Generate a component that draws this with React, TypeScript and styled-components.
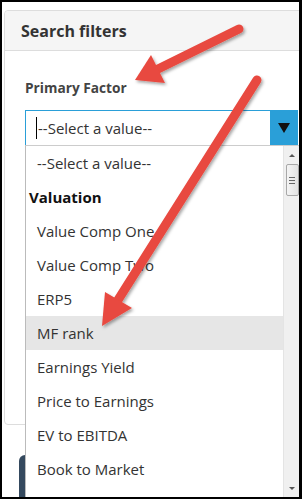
import styled, { createGlobalStyle } from 'styled-components';

const GlobalStyle = createGlobalStyle`
  html, body {
    margin: 0;
    padding: 0;
    background: #fff;
  }
  body {
    font-family: "Open Sans", "Noto Sans", sans-serif;
    color: #333;
  }
`;

const Frame = styled.div`
  position: relative;
  box-sizing: border-box;
  width: 302px;
  height: 499px;
  border-style: solid;
  border-color: #000;
  border-width: 2px 3px 2px 2px;
  background: #fff;
  overflow: hidden;
`;

const Panel = styled.section`
  margin: 8px 0 0 2px;
  width: 340px;
  border: 1px solid #ddd;
  border-radius: 4px;
  background: #fff;
`;

const PanelHeader = styled.header`
  height: 39px;
  padding: 0 16px;
  display: flex;
  align-items: center;
  background: #f5f5f5;
  border-bottom: 1px solid #ddd;
  border-radius: 4px 4px 0 0;
`;

const PanelTitle = styled.h3`
  margin: 0;
  font-size: 16px;
  font-weight: 700;
  color: #333;
`;

const PanelBody = styled.div`
  position: relative;
  height: 373px;
  padding: 27px 0 0 20px;
  box-sizing: border-box;
`;

const Label = styled.label`
  display: block;
  font-size: 13.7px;
  font-weight: 700;
  color: #444;
  margin-bottom: 13px;
`;

const SelectBox = styled.div`
  display: flex;
  width: 273px;
  height: 36px;
  box-sizing: border-box;
`;

const SelectField = styled.div`
  flex: 1;
  display: flex;
  align-items: center;
  padding-left: 10px;
  border: 1px solid #2a9fd8;
  border-right: none;
  font-size: 15px;
  color: #333;
`;

const Caret = styled.span`
  width: 1px;
  height: 22px;
  background: #000;
  margin-right: 1px;
`;

const SelectButton = styled.div`
  width: 28px;
  background: #2a9fd8;
  display: flex;
  align-items: center;
  justify-content: center;
`;

const Triangle = styled.span`
  width: 0;
  height: 0;
  border-left: 6px solid transparent;
  border-right: 6px solid transparent;
  border-top: 10px solid #111;
`;

const Dropdown = styled.div`
  position: absolute;
  left: 23px;
  top: 143px;
  width: 300px;
  height: 352px;
  display: flex;
  background: #fff;
  border-left: 1px solid #bbb;
  border-top: 1px solid #ccc;
  z-index: 2;
`;

const OptionList = styled.ul`
  list-style: none;
  margin: 0;
  padding: 0;
  width: 257px;
`;

const Option = styled.li<{ $group?: boolean; $hover?: boolean }>`
  height: 34px;
  display: flex;
  align-items: center;
  padding-left: ${(p) => (p.$group ? '3px' : '11px')};
  font-size: 15px;
  font-weight: ${(p) => (p.$group ? 700 : 400)};
  color: ${(p) => (p.$group ? '#111' : '#333')};
  background: ${(p) => (p.$hover ? '#e6e6e6' : '#fff')};
`;

const Scrollbar = styled.div`
  width: 16px;
  background: #f0f0f0;
  border-left: 1px solid #e4e4e4;
  display: flex;
  flex-direction: column;
  align-items: center;
`;

const ScrollArrow = styled.span<{ $down?: boolean }>`
  width: 0;
  height: 0;
  margin: ${(p) => (p.$down ? 'auto 0 8px' : '8px 0 0')};
  border-left: 3px solid transparent;
  border-right: 3px solid transparent;
  ${(p) => (p.$down ? 'border-top: 3px solid #555;' : 'border-bottom: 3px solid #555;')}
`;

const Thumb = styled.div`
  margin-top: 7px;
  width: 13px;
  height: 32px;
  box-sizing: border-box;
  border: 1px solid #a8a8a8;
  border-radius: 2px;
  background: linear-gradient(to right, #f4f4f4, #e2e2e2);
  display: flex;
  flex-direction: column;
  align-items: center;
  justify-content: center;
  gap: 2px;
`;

const Grip = styled.span`
  width: 6px;
  height: 1px;
  background: #666;
`;

const DarkButton = styled.div`
  margin: 30px 0 0 17px;
  width: 120px;
  height: 60px;
  background: #34495e;
  border-radius: 6px;
`;

const Overlay = styled.svg`
  position: absolute;
  left: -2px;
  top: -2px;
  z-index: 5;
  pointer-events: none;
`;

const options = [
  { text: 'Value Comp One' },
  { text: 'Value Comp Two' },
  { text: 'ERP5' },
  { text: 'MF rank', hover: true },
  { text: 'Earnings Yield' },
  { text: 'Price to Earnings' },
  { text: 'EV to EBITDA' },
  { text: 'Book to Market' },
];

function Arrow({ tail, tip, base, wings }: { tail: string; tip: string; base: string; wings: [string, string] }) {
  const [bx, by] = base.split(',');
  const [tx, ty] = tail.split(',');
  return (
    <g filter="url(#shadow)">
      <line x1={tx} y1={ty} x2={bx} y2={by} stroke="#e8493f" strokeWidth="9" strokeLinecap="round" />
      <polygon points={`${tip} ${wings[0]} ${wings[1]}`} fill="#e8493f" />
    </g>
  );
}

export default function App() {
  return (
    <>
      <GlobalStyle />
      <Frame>
        <Panel>
          <PanelHeader>
            <PanelTitle>Search filters</PanelTitle>
          </PanelHeader>
          <PanelBody>
            <Label>Primary Factor</Label>
            <SelectBox>
              <SelectField>
                <Caret />
                --Select a value--
              </SelectField>
              <SelectButton>
                <Triangle />
              </SelectButton>
            </SelectBox>
          </PanelBody>
        </Panel>
        <DarkButton />
        <Dropdown>
          <OptionList>
            <Option>--Select a value--</Option>
            <Option $group>Valuation</Option>
            {options.map((o) => (
              <Option key={o.text} $hover={o.hover}>
                {o.text}
              </Option>
            ))}
          </OptionList>
          <Scrollbar>
            <ScrollArrow />
            <Thumb>
              <Grip />
              <Grip />
              <Grip />
            </Thumb>
            <ScrollArrow $down />
          </Scrollbar>
        </Dropdown>
        <Overlay width="302" height="499" viewBox="0 0 302 499">
          <defs>
            <filter id="shadow" x="-20%" y="-20%" width="140%" height="140%">
              <feDropShadow dx="1.5" dy="2" stdDeviation="1.5" floodColor="#000" floodOpacity="0.35" />
            </filter>
          </defs>
          <Arrow tail="239,29" base="158,69" tip="135,80" wings={['165,83', '151,55']} />
          <Arrow tail="257,80" base="118,300" tip="102,326" wings={['132,308', '105,292']} />
        </Overlay>
      </Frame>
    </>
  );
}
